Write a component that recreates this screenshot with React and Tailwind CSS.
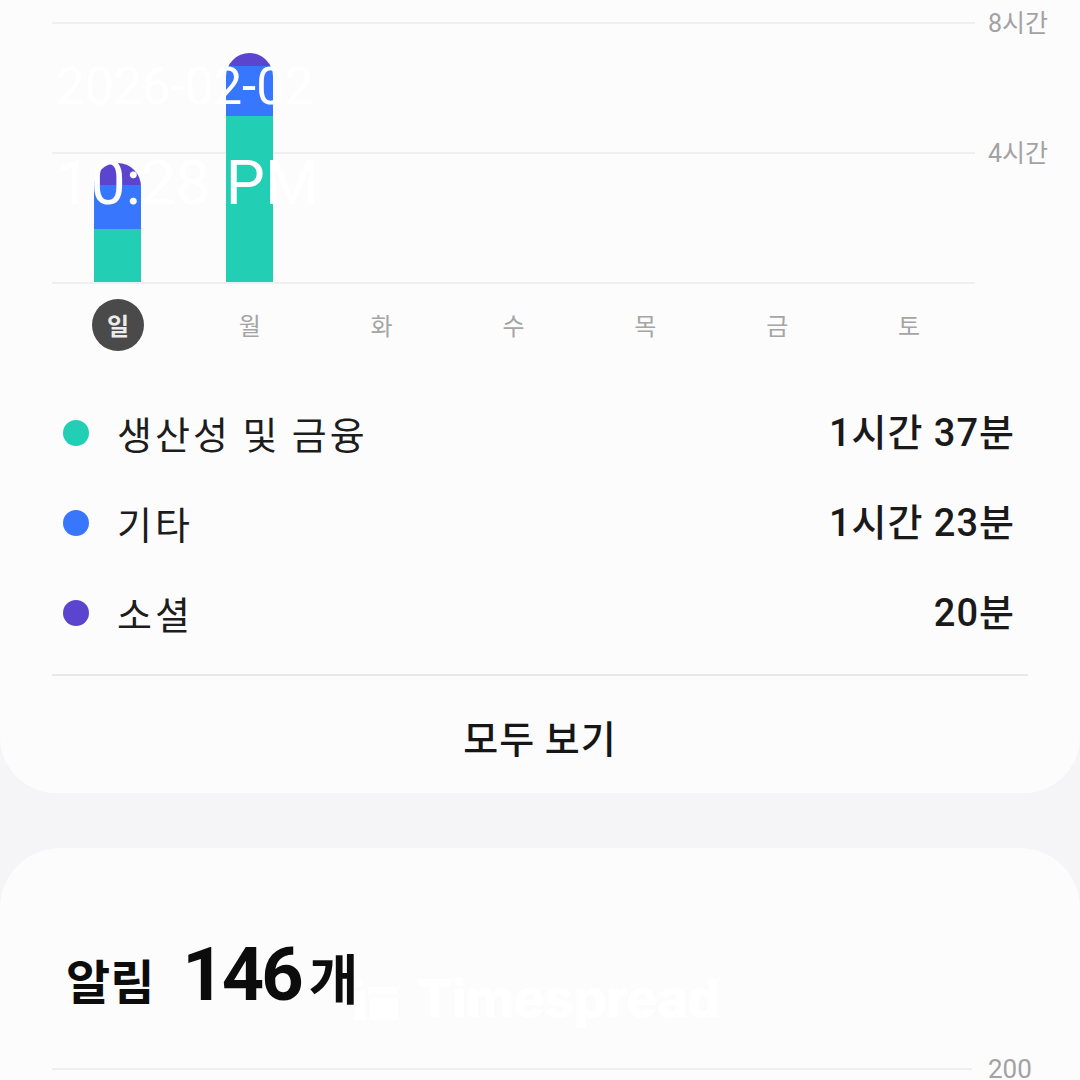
import React from 'react';

const days = ['일', '월', '화', '수', '목', '금', '토'];

// heights in px for each stacked segment: [social, other, productivity]
const bars = [
  { purple: 22, blue: 44, green: 53 },
  { purple: 13, blue: 50, green: 166 },
  null, null, null, null, null,
];

const legend = [
  { color: 'bg-[#22ceb4]', label: '생산성 및 금융', value: '1시간 37분' },
  { color: 'bg-[#3877fd]', label: '기타', value: '1시간 23분' },
  { color: 'bg-[#5b45cf]', label: '소셜', value: '20분' },
];

const GridRow = ({ label }) => (
  <div className="flex items-center h-[2px]">
    <div className="w-[923px] h-[2px] bg-[#efefef]" />
    {label && (
      <span className="ml-[13px] text-[25px] leading-none text-[#a2a2a2] whitespace-nowrap">{label}</span>
    )}
  </div>
);

const Bar = ({ data }) => {
  if (!data) return <div />;
  return (
    <div className="flex justify-center">
      <div className="w-[47px] flex flex-col rounded-t-full overflow-hidden">
        <div className="bg-[#5b45cf]" style={{ height: data.purple }} />
        <div className="bg-[#3877fd]" style={{ height: data.blue }} />
        <div className="bg-[#22ceb4]" style={{ height: data.green }} />
      </div>
    </div>
  );
};

export default function App() {
  return (
    <div className="relative w-[1080px] h-[1080px] overflow-hidden bg-[#f5f5f7] font-['Roboto','Noto_Sans_CJK_KR',sans-serif]">
      <div className="bg-[#fcfcfc] rounded-b-[56px]">
        {/* chart */}
        <div className="pt-[22px] pl-[52px]">
          <div className="relative h-[262px] flex flex-col justify-between">
            <GridRow label="8시간" />
            <GridRow label="4시간" />
            <GridRow />
            <div className="absolute left-0 bottom-[2px] w-[923px] grid grid-cols-7 items-end">
              {bars.map((b, i) => (
                <Bar key={i} data={b} />
              ))}
            </div>
          </div>
          <div className="mt-[15px] w-[923px] h-[52px] grid grid-cols-7">
            {days.map((d, i) => (
              <div key={d} className="flex items-center justify-center">
                {i === 0 ? (
                  <div className="w-[52px] h-[52px] rounded-full bg-[#4a4a4a] flex items-center justify-center text-[24px] font-bold text-[#ececec] font-['Noto_Sans_CJK_KR',sans-serif]">
                    {d}
                  </div>
                ) : (
                  <span className="text-[24px] text-[#a5a5a5] font-['Noto_Sans_CJK_KR',sans-serif]">{d}</span>
                )}
              </div>
            ))}
          </div>
        </div>

        {/* legend */}
        <div className="mt-[37px]">
          {legend.map((l) => (
            <div key={l.label} className="h-[90px] flex items-center pl-[63px] pr-[65px]">
              <div className={`w-[26px] h-[26px] rounded-full ${l.color}`} />
              <span className="ml-[28px] text-[38px] leading-none tracking-[3px] text-[#1d1d1d] font-['Noto_Sans_CJK_KR',sans-serif]">{l.label}</span>
              <span className="ml-auto text-[38px] leading-none tracking-[1px] font-medium text-[#1a1a1a]">{l.value}</span>
            </div>
          ))}
        </div>

        <div className="mt-[16px] mx-[52px] h-[2px] bg-[#e8e8e8]" />

        <div className="h-[117px] pt-[4px] flex items-center justify-center">
          <span className="text-[38px] leading-none tracking-[1px] font-medium text-[#161616] font-['Noto_Sans_CJK_KR',sans-serif]">모두 보기</span>
        </div>
      </div>

      {/* notifications card */}
      <div className="mt-[55px] bg-[#fcfcfc] rounded-t-[60px] h-[400px]">
        <div className="pt-[90px] pl-[66px] flex items-baseline text-[#0c0c0c]">
          <span className="text-[48px] font-bold leading-none font-['Noto_Sans_CJK_KR',sans-serif]">알림</span>
          <span className="ml-[28px] text-[74px] font-bold leading-none tracking-[-3px]">146</span>
          <span className="ml-[8px] text-[54px] font-bold leading-none font-['Noto_Sans_CJK_KR',sans-serif]">개</span>
        </div>
        <div className="mt-[56px] pl-[52px] flex items-center h-[2px]">
          <div className="w-[920px] h-[2px] bg-[#efefef]" />
          <span className="ml-[16px] text-[26px] leading-none text-[#a2a2a2]">200</span>
        </div>
      </div>

      {/* date / time overlay */}
      <div className="absolute left-[56px] top-[61px] text-white text-[51px] leading-none">
        2026-02-02
      </div>
      <div className="absolute left-[56px] top-[152px] text-white text-[62px] leading-none">
        10:28 PM
      </div>

      {/* watermark */}
      <div className="absolute left-[355px] top-[973px] flex items-center text-white">
        <svg width="44" height="42" viewBox="0 0 44 42" className="mr-[18px]">
          <circle cx="4" cy="5" r="4" fill="#ffffff" />
          <rect x="0" y="13" width="10" height="29" fill="#ffffff" />
          <rect x="13" y="9" width="30" height="7" fill="#ffffff" />
          <rect x="15" y="20" width="28" height="22" fill="#ffffff" />
        </svg>
        <span className="text-[52px] font-extrabold leading-none font-['Inter',sans-serif] tracking-[-0.5px]">Timespread</span>
      </div>
    </div>
  );
}
